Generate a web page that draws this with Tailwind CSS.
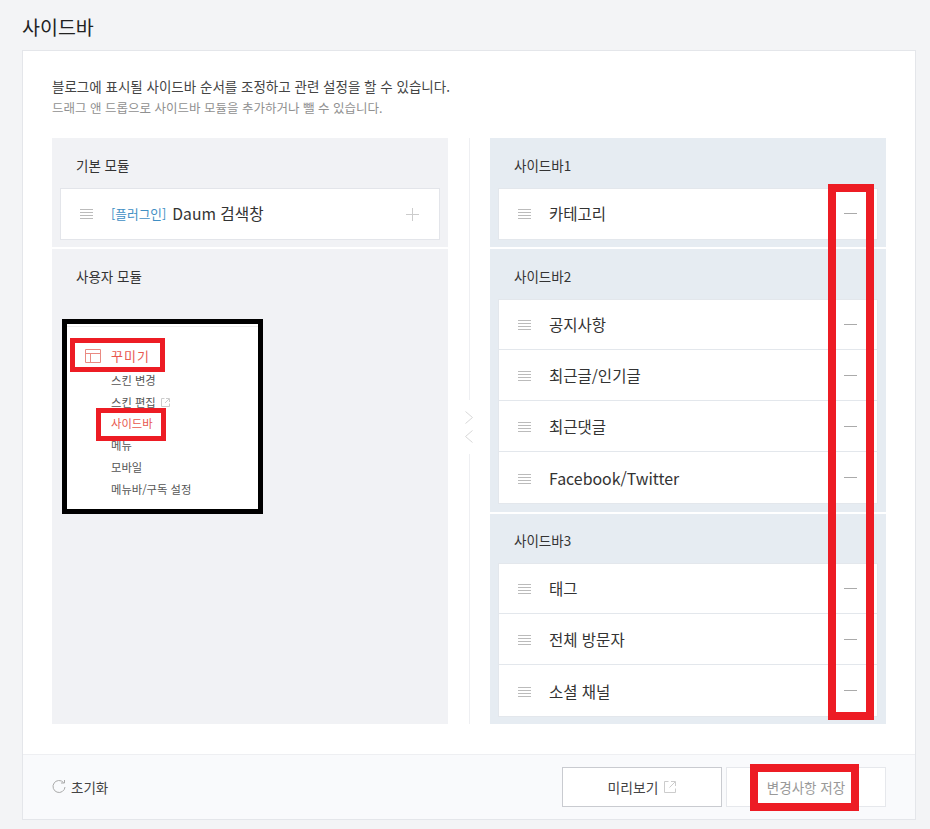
<!DOCTYPE html>
<html lang="ko">
<head>
  <meta charset="UTF-8">
  <title>사이드바</title>
  <script src="https://cdn.jsdelivr.net/npm/@tailwindcss/browser@4"></script>
</head>
<body class="bg-[#f3f4f6] font-['Noto_Sans_CJK_KR',sans-serif] text-[#333] h-[829px] overflow-hidden relative">
  <h1 class="pl-[22px] pt-[12px] h-[50px] text-[19.5px] leading-[29px] text-[#222]">사이드바</h1>

  <div class="ml-[22px] w-[894px] h-[770px] bg-white border border-[#e4e6ea] flex flex-col">
    <div class="px-[29px] pt-[25px] flex-1">
      <p class="text-[13.5px] leading-[20px] text-[#444]">블로그에 표시될 사이드바 순서를 조정하고 관련 설정을 할 수 있습니다.</p>
      <p class="text-[12.5px] leading-[19px] mt-[2px] text-[#909090]">드래그 앤 드롭으로 사이드바 모듈을 추가하거나 뺄 수 있습니다.</p>

      <div class="mt-[21px] flex">
        <!-- left -->
        <div class="w-[396px] flex flex-col gap-[2px]">
          <section class="bg-[#f1f2f5] h-[109px] px-[8px]">
            <h2 class="pl-[16px] h-[50px] pt-[17px] text-[13.5px] leading-[20px] text-[#333]">기본 모듈</h2>
            <div class="h-[52px] bg-white border border-[#e3e5ea] flex items-center pl-[19px] pr-[20px]">
              <svg width="13" height="10" viewBox="0 0 13 10" class="shrink-0"><path d="M0 .5h13M0 3.5h13M0 6.5h13M0 9.5h13" stroke="#bbb" /></svg>
              <span class="ml-[18px] text-[12.7px] text-[#3f8fc4]">[플러그인]</span>
              <span class="ml-[6px] text-[15.7px] text-[#333]">Daum 검색창</span>
              <svg width="13" height="13" viewBox="0 0 13 13" class="ml-auto"><path d="M6.5 0v13M0 6.5h13" stroke="#ccc" /></svg>
            </div>
          </section>
          <section class="bg-[#f1f2f5] h-[475px] px-[8px] relative">
            <h2 class="pl-[16px] pt-[17px] text-[13.5px] leading-[20px] text-[#333]">사용자 모듈</h2>

            <!-- pasted menu capture -->
            <div class="absolute left-[10px] top-[70px] w-[201px] h-[195px] bg-white border-[5px] border-black text-[11.3px] text-[#555]">
              <div class="h-px bg-[#eee] mt-[2px]"></div>
              <div class="absolute left-[3px] top-[14px] w-[95px] h-[34px] border-[5px] border-[#ed1c24] flex items-center pl-[10px] pt-[2px] gap-[10px] text-[13px] text-[#e8584f]">
                <svg width="16" height="14" viewBox="0 0 16 14" class="shrink-0"><path d="M.5.5h15v13H.5zM.5 4.5h15M5.5 4.5v9" fill="none" stroke="#ea8a82" /></svg>
                <span class="tracking-[1px]">꾸미기</span>
              </div>
              <ul class="absolute left-[44px] top-[46px] leading-[21.7px]">
                <li>스킨 변경</li>
                <li class="flex items-center gap-[5px]">스킨 편집
                  <svg width="9" height="9" viewBox="0 0 9 9"><path d="M3.5.5h-3v8h8v-3M5 .5h3.500v3.500M8 1L4 5" fill="none" stroke="#ccc" /></svg>
                </li>
                <li class="text-[#e8584f]">사이드바</li>
                <li>메뉴</li>
                <li>모바일</li>
                <li>메뉴바/구독 설정</li>
              </ul>
              <div class="absolute left-[29px] top-[84px] w-[70px] h-[33px] border-[5px] border-[#ed1c24]"></div>
            </div>
          </section>
        </div>

        <!-- divider -->
        <div class="w-[42px] flex flex-col items-center">
          <div class="w-px h-[262px] bg-[#eeeff2]"></div>
          <svg width="8" height="32" viewBox="0 0 8 32" class="my-[11px]"><path d="M.5.5l7 6-7 6M7.500 19.500l-7 6 7 6" fill="none" stroke="#d8d8d8" /></svg>
          <div class="w-px flex-1 bg-[#eeeff2]"></div>
        </div>

        <!-- right -->
        <div class="w-[396px] flex flex-col gap-[2px] relative">
          <section class="bg-[#e6ecf2] h-[109px] px-[8px]">
            <h2 class="pl-[16px] h-[50px] pt-[17px] text-[13.5px] leading-[20px] text-[#333]">사이드바1</h2>
            <div class="border border-[#e3e7ec] bg-white divide-y divide-[#e3e7ec]">
              <div class="h-[50px] flex items-center pl-[19px] pr-[20px]">
                <svg width="13" height="10" viewBox="0 0 13 10"><path d="M0 .5h13M0 3.5h13M0 6.5h13M0 9.5h13" stroke="#bbb" /></svg>
                <span class="ml-[18px] text-[15.5px]">카테고리</span>
                <svg width="13" height="1" class="ml-auto mb-[2px]"><path d="M0 .5h13" stroke="#aaa" /></svg>
              </div>
            </div>
          </section>
          <section class="bg-[#e6ecf2] h-[263px] px-[8px]">
            <h2 class="pl-[16px] h-[50px] pt-[17px] text-[13.5px] leading-[20px] text-[#333]">사이드바2</h2>
            <div class="border border-[#e3e7ec] bg-white divide-y divide-[#e3e7ec]">
              <div class="h-[50px] flex items-center pl-[19px] pr-[20px]">
                <svg width="13" height="10" viewBox="0 0 13 10"><path d="M0 .5h13M0 3.5h13M0 6.5h13M0 9.5h13" stroke="#bbb" /></svg>
                <span class="ml-[18px] text-[15.5px]">공지사항</span>
                <svg width="13" height="1" class="ml-auto"><path d="M0 .5h13" stroke="#aaa" /></svg>
              </div>
              <div class="h-[51px] flex items-center pl-[19px] pr-[20px] pt-[2px]">
                <svg width="13" height="10" viewBox="0 0 13 10"><path d="M0 .5h13M0 3.5h13M0 6.5h13M0 9.5h13" stroke="#bbb" /></svg>
                <span class="ml-[18px] text-[15.5px]">최근글/인기글</span>
                <svg width="13" height="1" class="ml-auto mb-[2px]"><path d="M0 .5h13" stroke="#aaa" /></svg>
              </div>
              <div class="h-[51px] flex items-center pl-[19px] pr-[20px] pt-[2px]">
                <svg width="13" height="10" viewBox="0 0 13 10"><path d="M0 .5h13M0 3.5h13M0 6.5h13M0 9.5h13" stroke="#bbb" /></svg>
                <span class="ml-[18px] text-[15.5px]">최근댓글</span>
                <svg width="13" height="1" class="ml-auto mb-[2px]"><path d="M0 .5h13" stroke="#aaa" /></svg>
              </div>
              <div class="h-[51px] flex items-center pl-[19px] pr-[20px] pt-[2px]">
                <svg width="13" height="10" viewBox="0 0 13 10"><path d="M0 .5h13M0 3.5h13M0 6.5h13M0 9.5h13" stroke="#bbb" /></svg>
                <span class="ml-[18px] text-[15.9px]">Facebook/Twitter</span>
                <svg width="13" height="1" class="ml-auto mb-[2px]"><path d="M0 .5h13" stroke="#aaa" /></svg>
              </div>
            </div>
          </section>
          <section class="bg-[#e6ecf2] h-[210px] px-[8px]">
            <h2 class="pl-[16px] h-[49px] pt-[16px] text-[13.5px] leading-[20px] text-[#333]">사이드바3</h2>
            <div class="border border-[#e3e7ec] bg-white divide-y divide-[#e3e7ec]">
              <div class="h-[50px] flex items-center pl-[19px] pr-[20px]">
                <svg width="13" height="10" viewBox="0 0 13 10"><path d="M0 .5h13M0 3.5h13M0 6.5h13M0 9.5h13" stroke="#bbb" /></svg>
                <span class="ml-[18px] text-[15.5px]">태그</span>
                <svg width="13" height="1" class="ml-auto"><path d="M0 .5h13" stroke="#aaa" /></svg>
              </div>
              <div class="h-[51px] flex items-center pl-[19px] pr-[20px] pt-[2px]">
                <svg width="13" height="10" viewBox="0 0 13 10"><path d="M0 .5h13M0 3.5h13M0 6.5h13M0 9.5h13" stroke="#bbb" /></svg>
                <span class="ml-[18px] text-[15.5px]">전체 방문자</span>
                <svg width="13" height="1" class="ml-auto mb-[2px]"><path d="M0 .5h13" stroke="#aaa" /></svg>
              </div>
              <div class="h-[51px] flex items-center pl-[19px] pr-[20px] pt-[2px]">
                <svg width="13" height="10" viewBox="0 0 13 10"><path d="M0 .5h13M0 3.5h13M0 6.5h13M0 9.5h13" stroke="#bbb" /></svg>
                <span class="ml-[18px] text-[15.5px]">소셜 채널</span>
                <svg width="13" height="1" class="ml-auto mb-[2px]"><path d="M0 .5h13" stroke="#aaa" /></svg>
              </div>
            </div>
          </section>
          <!-- red annotation -->
          <div class="absolute left-[338px] top-[46px] w-[46px] h-[536px] border-[8px] border-[#ed1c24]"></div>
        </div>
      </div>
    </div>

    <!-- footer -->
    <div class="relative h-[65px] bg-[#f9fafc] border-t border-[#eeeff2] flex items-center px-[29px]">
      <svg width="14" height="14" viewBox="0 0 14 14"><path d="M11.500 2.500A6 6 0 1 0 13 7" fill="none" stroke="#aaa" /><path d="M9 3h3.500V0" fill="none" stroke="#aaa" /></svg>
      <span class="ml-[5px] text-[13.5px] text-[#444]">초기화</span>
      <button class="ml-auto w-[160px] h-[40px] bg-white border border-[#c9cbd0] text-[13.8px] text-[#444] flex items-center justify-center gap-[6px]">미리보기
        <svg width="12" height="12" viewBox="0 0 12 12"><path d="M4.500.5h-4v11h11v-4M7 .5h4.500V5M11 1L5.500 6.500" fill="none" stroke="#ccc" /></svg>
      </button>
      <button class="ml-[4px] w-[160px] h-[40px] bg-white border border-[#e6e8ec] text-[13.5px] text-[#999]">변경사항 저장</button>
      <div class="absolute left-[727px] top-[9px] w-[109px] h-[47px] border-[8px] border-[#ed1c24]"></div>
    </div>
  </div>
</body>
</html>
